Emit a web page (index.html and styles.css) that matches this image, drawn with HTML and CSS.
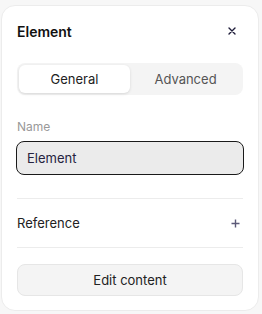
FILE: index.html
```html
<!DOCTYPE html>
<html>
<head>
<meta charset="utf-8">
<link rel="stylesheet" href="styles.css">
</head>
<body>
<div class="card">
  <div class="header">
    <span class="title">Element</span>
    <svg class="close" width="8" height="8" viewBox="0 0 8 8"><path d="M1 1 L7 7 M7 1 L1 7" stroke="#1f1d3a" stroke-width="1.4" stroke-linecap="round"/></svg>
  </div>
  <div class="seg">
    <div class="tab active">General</div>
    <div class="tab">Advanced</div>
  </div>
  <div class="label">Name</div>
  <div class="input">Element</div>
  <div class="row">
    <span>Reference</span>
    <svg class="plus" width="9" height="9" viewBox="0 0 9 9"><path d="M4.5 0.5 V8.5 M0.5 4.5 H8.5" stroke="#5c5a78" stroke-width="1.4"/></svg>
  </div>
  <div class="btn">Edit content</div>
</div>
</body>
</html>
```
FILE: styles.css
```css
* { box-sizing: border-box; }
body {
  margin: 0;
  padding: 5px 0 0 1px;
  background: #f7f7f7;
  font-family: Inter, "Noto Sans", sans-serif;
  color: #1c1c1c;
}
.card {
  width: 258px;
  height: 306px;
  background: #fff;
  border: 1px solid #ececec;
  border-radius: 14px;
  padding: 14px 15px 14px 15px;
  display: flex;
  flex-direction: column;
}
.header {
  height: 22px;
  display: flex;
  align-items: center;
  justify-content: space-between;
  margin-bottom: 21px;
}
.title {
  font-size: 14px;
  font-weight: 600;
  color: #111;
}
.close { margin-right: 7px; }
.seg {
  height: 32px;
  background: #f4f4f4;
  border-radius: 8px;
  padding: 2px;
  display: flex;
}
.tab {
  flex: 1;
  display: flex;
  align-items: center;
  justify-content: center;
  font-size: 13px;
  color: #555;
  border-radius: 6px;
}
.tab.active {
  background: #fff;
  color: #222;
  box-shadow: 0 1px 3px rgba(0,0,0,0.12);
}
.label {
  margin-top: 24px;
  height: 16px;
  line-height: 16px;
  font-size: 12px;
  color: #999;
}
.input {
  margin-top: 6px;
  height: 34px;
  margin-left: -1px;
  margin-right: -1px;
  background: #ebebeb;
  border: 1px solid #1a1a1a;
  border-radius: 8px;
  padding: 0 10px;
  display: flex;
  align-items: center;
  font-size: 13px;
  color: #26233f;
}
.row {
  margin-top: 23px;
  height: 50px;
  border-top: 1px solid #ececec;
  border-bottom: 1px solid #ececec;
  display: flex;
  align-items: center;
  justify-content: space-between;
  font-size: 13px;
  color: #222;
}
.plus { margin-right: 3px; }
.btn {
  margin-top: 16px;
  height: 32px;
  background: #f4f4f4;
  border: 1px solid #e6e6e6;
  border-radius: 8px;
  display: flex;
  align-items: center;
  justify-content: center;
  font-size: 13px;
  color: #222;
}
```
